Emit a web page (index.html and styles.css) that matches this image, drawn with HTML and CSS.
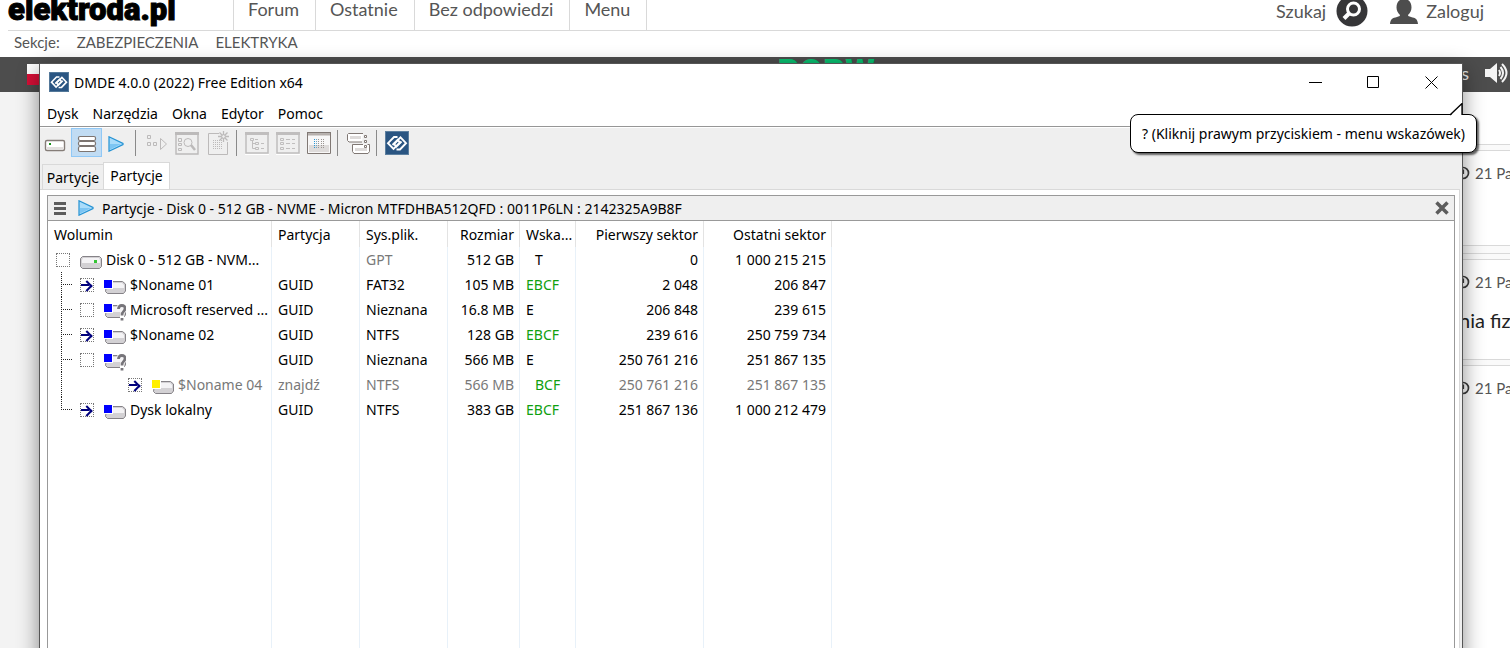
FILE: index.html
```html
<!DOCTYPE html>
<html lang="pl">
<head>
<meta charset="utf-8">
<title>elektroda.pl</title>
<link rel="stylesheet" href="styles.css">
</head>
<body>
<svg class="defs" aria-hidden="true">
  <symbol id="dmde" viewBox="0 0 24 24">
    <rect width="24" height="24" fill="#2a5582"/>
    <rect x=".5" y=".5" width="23" height="23" fill="none" stroke="#5c7f9f"/>
    <g fill="none" stroke="#fff" stroke-width="1.900">
      <path d="M12.500 6H9L3 12.200l5.500 5.800L15 11.500l-2.300-2.600L7.500 14"/>
      <path d="M11.500 18.500H15L21 12.200l-5.500-5.800L9 13l2.300 2.600L16.500 10.500"/>
    </g>
  </symbol>
  <symbol id="part" viewBox="0 0 22 16">
    <path d="M3 2.500h15.500l3 2.500v7l-2 2.500h-16l-2-2z" fill="#d3d1d4" stroke="#858287"/>
    <path d="M4 4h14l2 2v3h-16z" fill="#f4f3f5"/>
  </symbol>
  <symbol id="quest" viewBox="0 0 22 18">
    <path d="M14.500 5.500q0-3 3.500-3t3.200 3q0 1.500-1.700 3t-1.500 3.500v5" fill="none" stroke="#fff" stroke-width="4"/>
    <path d="M14.500 6q0-3.500 3.300-3.500t3.200 3q0 1.800-1.500 3t-1.500 4M18 15v2.500" fill="none" stroke="#77757a" stroke-width="2.800"/>
  </symbol>
  <symbol id="play" viewBox="0 0 16 16">
    <path d="M1 .8v14.400L15 8.500v-1z" fill="#a9dcfb" stroke="#2492d3" stroke-width="1.200"/>
    <path d="M2 8h11L2 13.500z" fill="#7cc5f3"/>
  </symbol>
  <symbol id="clock" viewBox="0 0 14 14">
    <circle cx="7" cy="7" r="5.500" fill="none" stroke="#3c3c3c" stroke-width="1.700"/>
    <path d="M7.500 3.500v4H4.500" fill="none" stroke="#3c3c3c" stroke-width="1.200"/>
  </symbol>
</svg>

<header class="site-head">
  <a class="logo" href="#">elektroda.pl</a>
  <nav class="site-nav">
    <a href="#">Forum</a><a href="#">Ostatnie</a><a href="#">Bez odpowiedzi</a><a href="#">Menu</a>
  </nav>
  <div class="account">
    <a href="#">Szukaj
      <svg width="32" height="32" viewBox="0 0 32 32"><circle cx="16" cy="16" r="15.500" fill="#363638"/><circle cx="17.500" cy="14" r="6" fill="none" stroke="#fff" stroke-width="3"/><path d="M13 18.500l-5 5" stroke="#fff" stroke-width="4"/></svg>
    </a>
    <a href="#">
      <svg width="28" height="28" viewBox="0 0 28 28"><path d="M14 2c5 0 7.500 3.500 7.500 8.500 0 3-1.500 6-3.500 7.500 0 1 1 1.500 3 2 4.500 1 6.500 2 7 7H0c.5-5 2.500-6 7-7 2-.5 3-1 3-2-2-1.500-3.500-4.500-3.500-7.500C6.500 5.500 9 2 14 2z" fill="#4d4d4d"/></svg>
      Zaloguj</a>
  </div>
</header>
<nav class="sections"><span>Sekcje:</span><a href="#">ZABEZPIECZENIA</a><a href="#">ELEKTRYKA</a></nav>
<div class="banner">
  <span class="flag"></span>
  <span class="promo">PORW</span>
  <span class="sound">s
    <svg width="24" height="20" viewBox="0 0 24 20"><path d="M0 6h5l7-6v20l-7-6H0z" fill="#f4f4f4"/><path d="M14 7q2 3 0 6M15.500 4q5 6 0 12M17 1q9 9 0 18" fill="none" stroke="#f4f4f4" stroke-width="2"/></svg>
  </span>
</div>
<main class="forum">
  <div class="posts">
    <div class="rule"></div>
    <article class="post post-tall"><p class="date"><svg width="14" height="14"><use href="#clock"/></svg>21 Pa</p></article>
    <div class="rule rule-thin"></div>
    <div class="rule"></div>
    <article class="post"><p class="date"><svg width="14" height="14"><use href="#clock"/></svg>21 Pa</p><p class="topic">nia fiz</p></article>
    <div class="rule"></div>
    <article class="post"><p class="date"><svg width="14" height="14"><use href="#clock"/></svg>21 Pa</p></article>
  </div>
</main>

<section class="window" aria-label="DMDE">
  <div class="titlebar">
    <svg width="20" height="20"><use href="#dmde"/></svg>
    <h1>DMDE 4.0.0 (2022) Free Edition x64</h1>
    <div class="controls">
      <button aria-label="Minimalizuj"><svg width="13" height="13"><path d="M0 6.500h13" stroke="#000"/></svg></button>
      <button aria-label="Maksymalizuj"><svg width="13" height="13"><path d="M.5.500h11v11H.5z" fill="none" stroke="#000"/></svg></button>
      <button aria-label="Zamknij"><svg width="13" height="13"><path d="M.5.500l12 12M12.500.500l-12 12" stroke="#000"/></svg></button>
    </div>
  </div>
  <nav class="menu"><button>Dysk</button><button>Narzędzia</button><button>Okna</button><button>Edytor</button><button>Pomoc</button></nav>
  <div class="toolbar">
    <button aria-label="Dysk"><svg width="31" height="29"><rect x="5.500" y="12.500" width="19" height="10" rx="1.500" fill="#fff" stroke="#857d78" stroke-width="1.400"/><path d="M7 19h16v2H7z" fill="#e2dfde"/><path d="M9 15h2v2H9z" fill="#189018"/></svg></button>
    <button class="active" aria-label="Partycje"><svg width="31" height="29" fill="#fff" stroke="#7d7571" stroke-width="1.200"><rect x="7.500" y="8.500" width="17" height="4" rx="1.500"/><rect x="7.500" y="13.500" width="17" height="4" rx="1.500"/><rect x="7.500" y="18.500" width="17" height="5" rx="1.500"/></svg></button>
    <button aria-label="Otwórz"><svg width="31" height="29"><use href="#play" x="6" y="8" width="16" height="16"/></svg></button>
    <i class="sep"></i>
    <button aria-label="Dalej"><svg width="31" height="29" fill="none" stroke="#bcbaba"><path d="M6.500 7.500h3v3h-3zM6.500 14.500h3v3h-3zM12.500 14.500h3v3h-3zM19.500 10.500v11l6-5.500z"/></svg></button>
    <button aria-label="Szukaj"><svg width="31" height="29" fill="none" stroke="#bcbaba"><path d="M4 5v21h22V5z" stroke-width="1.400"/><path d="M3 5.500h24" stroke-width="3"/><path d="M6.500 10.500h3v3h-3zM6.500 15.500h3v2h-3zM6.500 20.500h3v2h-3z"/><circle cx="16" cy="14.500" r="4"/><path d="M19 17l4 5" stroke-width="2.500"/></svg></button>
    <button aria-label="Nowy"><svg width="31" height="29" fill="none" stroke="#bcbaba"><path d="M16 5.500H5.500v21h19V14"/><path d="M10 12.500h9M10 14.500h9M10 16.500h9M10 18.500h9M10 20.500h9" stroke-dasharray="1 1"/><path d="M20.500 3v11M15 8.500h11M16.500 4.500l8 8M24.500 4.500l-8 8" stroke-width="1.300"/><circle cx="20.500" cy="8.500" r="1.800" fill="#efefef"/></svg></button>
    <i class="sep"></i>
    <button aria-label="Drzewo"><svg width="31" height="29" fill="none" stroke="#c0bebe"><path d="M4 5v20h22V5z" stroke-width="1.500"/><path d="M3 5.500h24" stroke-width="3"/><path d="M3 26.500h24" stroke="#fff"/><path d="M8.500 10.500h3v2h-3zM13.500 14.500h3v2h-3zM13.500 19.500h3v2h-3zM10.500 13v7.500h3M10.500 15.500h3M13 11.500h3M19 15.500h3M19 20.500h3"/></svg></button>
    <button aria-label="Lista"><svg width="31" height="29" fill="none" stroke="#c0bebe"><path d="M4 5v20h22V5z" stroke-width="1.500"/><path d="M3 5.500h24" stroke-width="3"/><path d="M3 26.500h24" stroke="#fff"/><path d="M7.500 10.500h3v2h-3zM7.500 14.500h3v2h-3zM7.500 19.500h3v2h-3zM13 11.500h4M19 11.500h3M13 15.500h4M19 15.500h3M13 20.500h4M19 20.500h3"/></svg></button>
    <button aria-label="Hex"><svg width="31" height="29" fill="none"><path d="M3.500 5v20.500h23V5z" fill="#f8f7f7" stroke="#807874"/><path d="M5 17h20v7H5z" fill="#dedbda"/><path d="M4 6.500h22" stroke="#b5aeab" stroke-width="2"/><path d="M3 4.500h24" stroke="#807874"/><path d="M10.500 11v9" stroke="#2596d6" stroke-dasharray="1 1"/><path d="M12.500 11v9" stroke="#6fa8c8" stroke-dasharray="1 1"/><path d="M14.500 11v9M17.500 11v9M19.500 11v9" stroke="#9b9591" stroke-dasharray="1 1"/></svg></button>
    <i class="sep"></i>
    <button aria-label="Układ"><svg width="31" height="29" fill="#fff" stroke="#807874"><path d="M20 5.500H5.500l-1 1v6l1.500 1.500h13"/><path d="M7 8h11v3H7z" fill="#dedbda" stroke="none"/><path d="M20 16.500H9.500v7l1.500 2h14l1.500-2v-7h-2"/><path d="M12 20h12v3H12z" fill="#dedbda" stroke="none"/><path d="M21.500 7.500h2v2h-2zM21.500 12.500h2v2h-2zM21.500 17.500h2v2h-2z"/></svg></button>
    <i class="sep"></i>
    <button aria-label="DMDE"><svg width="31" height="29"><use href="#dmde" x="3" y="3" width="24" height="24"/></svg></button>
  </div>
  <div class="tabs" role="tablist"><button role="tab">Partycje</button><button role="tab" class="current" aria-selected="true">Partycje</button></div>
  <div class="page">
    <div class="panel">
      <div class="panel-head">
        <button aria-label="Menu panelu"><svg width="12" height="13"><path d="M0 1.500h12M0 6.500h12M0 11.500h12" stroke="#5c5c5c" stroke-width="3"/></svg></button>
        <svg width="16" height="16"><use href="#play"/></svg>
        <h2>Partycje - Disk 0 - 512 GB - NVME - Micron MTFDHBA512QFD : 0011P6LN : 2142325A9B8F</h2>
        <button aria-label="Zamknij panel"><svg width="14" height="14"><path d="M1.500 1.500l11 11M12.500 1.500l-11 11" stroke="#5c5c5c" stroke-width="3.500"/></svg></button>
      </div>
      <table>
        <colgroup><col class="c-vol"><col class="c-part"><col class="c-part"><col class="c-size"><col class="c-flag"><col class="c-sec"><col class="c-sec"><col></colgroup>
        <thead><tr><th>Wolumin</th><th>Partycja</th><th>Sys.plik.</th><th class="num">Rozmiar</th><th>Wska...</th><th class="num">Pierwszy sektor</th><th class="num">Ostatni sektor</th><th></th></tr></thead>
        <tbody>
          <tr><td><label class="vol"><input type="checkbox"><svg width="22" height="16" viewBox="0 0 22 16"><path d="M2.500 2.500h17l2 2v8l-2 2h-17l-2-2v-8z" fill="#d3d1d4" stroke="#858287"/><path d="M3 4h16l1 2v3H2V6z" fill="#f4f3f5"/><path d="M14 6h3v3h-3z" fill="#35c535"/></svg>Disk 0 - 512 GB - NVM...</label></td><td></td><td class="dim">GPT</td><td class="num">512 GB</td><td class="shift">T</td><td class="num">0</td><td class="num">1 000 215 215</td><td></td></tr>
          <tr><td class="branch"><label class="vol child"><input type="checkbox" checked><svg width="22" height="16"><use href="#part"/><path d="M0 1h9v9H0z" fill="#fff"/><path d="M0 1h8v8H0z" fill="#00f"/></svg>$Noname 01</label></td><td>GUID</td><td>FAT32</td><td class="num">105 MB</td><td class="ok">EBCF</td><td class="num">2 048</td><td class="num">206 847</td><td></td></tr>
          <tr><td class="branch"><label class="vol child"><input type="checkbox"><svg width="22" height="18"><use href="#part" width="22" height="16"/><use href="#quest"/><path d="M0 1h9v9H0z" fill="#fff"/><path d="M0 1h8v8H0z" fill="#00f"/></svg>Microsoft reserved ...</label></td><td>GUID</td><td>Nieznana</td><td class="num">16.8 MB</td><td>E</td><td class="num">206 848</td><td class="num">239 615</td><td></td></tr>
          <tr><td class="branch"><label class="vol child"><input type="checkbox" checked><svg width="22" height="16"><use href="#part"/><path d="M0 1h9v9H0z" fill="#fff"/><path d="M0 1h8v8H0z" fill="#00f"/></svg>$Noname 02</label></td><td>GUID</td><td>NTFS</td><td class="num">128 GB</td><td class="ok">EBCF</td><td class="num">239 616</td><td class="num">250 759 734</td><td></td></tr>
          <tr><td class="branch"><label class="vol child"><input type="checkbox" aria-label="Nieznana"><svg width="22" height="18"><use href="#part" width="22" height="16"/><use href="#quest"/><path d="M0 1h9v9H0z" fill="#fff"/><path d="M0 1h8v8H0z" fill="#00f"/></svg></label></td><td>GUID</td><td>Nieznana</td><td class="num">566 MB</td><td>E</td><td class="num">250 761 216</td><td class="num">251 867 135</td><td></td></tr>
          <tr class="dim"><td class="branch through"><label class="vol grandchild"><input type="checkbox" checked><svg width="22" height="16"><use href="#part"/><path d="M0 1h9v9H0z" fill="#fff"/><path d="M0 1h8v8H0z" fill="#ffef00"/></svg>$Noname 04</label></td><td>znajdź</td><td>NTFS</td><td class="num">566 MB</td><td class="ok shift">BCF</td><td class="num">250 761 216</td><td class="num">251 867 135</td><td></td></tr>
          <tr><td class="branch last"><label class="vol child"><input type="checkbox" checked><svg width="22" height="16"><use href="#part"/><path d="M0 1h9v9H0z" fill="#fff"/><path d="M0 1h8v8H0z" fill="#00f"/></svg>Dysk lokalny</label></td><td>GUID</td><td>NTFS</td><td class="num">383 GB</td><td class="ok">EBCF</td><td class="num">251 867 136</td><td class="num">1 000 212 479</td><td></td></tr>
          <tr class="fill"><td></td><td></td><td></td><td></td><td></td><td></td><td></td><td></td></tr>
        </tbody>
      </table>
    </div>
  </div>
</section>
<div class="tip" role="tooltip">
  <svg class="tip-arrow" width="14" height="14"><path d="M1 12L12 1v11" fill="#fff"/><path d="M0 12L12 .500V12" fill="none" stroke="#000" stroke-width="1.300"/></svg>
  ? (Kliknij prawym przyciskiem - menu wskazówek)
</div>
</body>
</html>
```
FILE: styles.css
```css
* { box-sizing: border-box; }
body {
  margin: 0;
  height: 100vh;
  overflow: hidden;
  position: relative;
  display: flex;
  flex-direction: column;
  background: #fff;
  font-family: "Noto Sans", "Open Sans", sans-serif;
  font-size: 14px;
  color: #000;
}
svg { display: block; flex: none; }
a { color: inherit; text-decoration: none; }
button { border: 0; padding: 0; background: none; font: inherit; color: inherit; }
h1, h2, p { margin: 0; font-size: inherit; font-weight: 400; }
.defs { position: absolute; width: 0; height: 0; }

/* forum page */
.site-head, .sections, .posts, .banner { font-family: Lato, sans-serif; color: #555; }
.site-head {
  flex: none;
  display: flex;
  height: 31px;
  margin-left: 8px;
  border-bottom: 1px solid #d9d9d9;
}
.logo {
  width: 225px;
  font-family: Roboto, sans-serif;
  font-size: 31px;
  line-height: 20px;
  font-weight: 900;
  color: #000;
  -webkit-text-stroke: 1px #000;
}
.site-nav { display: flex; border-left: 1px solid #d9d9d9; font-size: 18px; line-height: 18px; }
.site-nav a { padding: 0 16px 0 14px; border-right: 1px solid #d9d9d9; }
.account { display: flex; gap: 24px; margin-left: auto; padding-right: 26px; font-size: 18px; }
.account a { display: flex; align-items: center; gap: 8px; height: 21px; }
.account a:first-child { gap: 10px; margin-right: -2px; }
.sections {
  flex: none;
  display: flex;
  gap: 17px;
  height: 26px;
  padding-left: 14px;
  font-size: 15px;
  line-height: 22px;
}
.banner { flex: none; display: flex; justify-content: space-between; height: 35px; background: #4d4d4d; }
.flag { width: 24px; height: 21px; margin: 7px 0 0 27px; background: linear-gradient(#fff 50%, #d80f37 50%); }
.promo { margin-left: 140px; font: 900 34px/28px Roboto, sans-serif; color: #0abf70; }
.sound { display: flex; align-items: center; gap: 16px; height: 31px; padding-right: 1px; font-size: 18px; color: #eee; }
.forum { flex: 1; display: flex; }
.forum::before { content: ""; width: 60px; background: #f3f3f3; }
.posts { flex: 1; display: flex; flex-direction: column; align-items: stretch; padding-top: 52px; overflow: hidden; }
.rule { flex: none; height: 7px; border: solid #d9d9d9; border-width: 1px 0; background: #fafafa; }
.rule-thin { border-bottom: 0; height: 8px; }
.post { width: 54px; height: 99px; margin-left: auto; padding-top: 12px; white-space: nowrap; }
.post-tall { height: 94px; }
.date { display: flex; align-items: center; gap: 5px; font-size: 15px; line-height: 20px; }
.topic { margin-top: 16px; padding-left: 3px; font-size: 20px; line-height: 24px; color: #222; }

/* application window */
.window {
  position: absolute;
  inset: 63px 47px -20px 39px;
  display: flex;
  flex-direction: column;
  border: 1px solid #555;
  background: #efefef;
  box-shadow: 0 6px 20px rgba(0, 0, 0, .45);
}
.titlebar { flex: none; display: flex; align-items: center; gap: 5px; height: 36px; padding: 0 2px 0 9px; background: #fff; }
.controls { display: flex; margin-left: auto; }
.controls button { display: grid; place-items: center; width: 58px; height: 36px; }
.menu { flex: none; display: flex; gap: 14px; height: 26px; padding-left: 7px; background: #fff; line-height: 28px; }
.toolbar { flex: none; display: flex; height: 36px; border-top: 1px solid #969696; box-shadow: inset 0 1px #fff; padding-top: 1px; }
.toolbar button { width: 31px; height: 29px; }
.toolbar .active { background: #c1dcf3; outline: 1px solid #90c8f6; outline-offset: -1px; }
.sep { width: 8px; height: 26px; margin-top: 2px; background: linear-gradient(#8a8a8a, #8a8a8a) 2px 0 / 1px 100% no-repeat; }
.tabs { flex: none; display: flex; align-items: flex-end; height: 27px; padding-left: 2px; }
.tabs button { width: 61px; height: 25px; border: 1px solid #d9d9d9; border-width: 1px 0 0 1px; }
.tabs .current { width: 67px; height: 27px; padding-bottom: 2px; border-right-width: 1px; background: #fff; }
.page { flex: 1; display: flex; margin-right: 2px; padding: 5px 4px 0 7px; border: 1px solid #d9d9d9; border-left: 0; background: #fff; }
.panel { flex: 1; display: flex; flex-direction: column; border: 1px solid #999; }
.panel-head { flex: none; display: flex; align-items: center; gap: 12px; height: 25px; padding: 0 5px 0 6px; border-bottom: 1px solid #999; background: #efefef; }
.panel-head h2 { flex: 1; margin-left: -4px; }

table { flex: 1; width: 100%; table-layout: fixed; border-collapse: separate; border-spacing: 0; }
.c-vol { width: 224px; }
.c-part { width: 88px; }
.c-size { width: 72px; }
.c-flag { width: 56px; }
.c-sec { width: 128px; }
th, td { height: 25px; padding: 0 5px 0 6px; border-right: 1px solid #e8f1f9; font-weight: 400; text-align: left; line-height: 24px; white-space: nowrap; }
th { height: 26px; padding-top: 2px; border-color: #e3e3e3; }
th:last-child, td:last-child { border-right: 0; }
td:first-child { position: relative; padding: 0; }
tr .num { text-align: right; }
.fill td { height: auto; }
.dim { color: #787878; }
tr .ok { color: #0fa00f; }
tr .shift { padding-left: 15px; }
.vol { display: flex; align-items: center; height: 25px; padding-left: 8px; }
.vol svg { margin: 4px 4px 0 10px; }
.child { padding-left: 32px; }
.grandchild { padding-left: 80px; }
input {
  appearance: none;
  flex: none;
  position: relative;
  width: 14px;
  height: 14px;
  margin: 0;
  border: 1px dotted #777;
}
input:checked { background: linear-gradient(#00007c, #00007c) 0 5px / 8px 2px no-repeat; }
input:checked::after {
  content: "";
  position: absolute;
  top: 3px;
  left: 2px;
  width: 6px;
  height: 6px;
  border: solid #00007c;
  border-width: 2px 2px 0 0;
  transform: rotate(45deg);
}
.branch::before, .branch::after { content: ""; position: absolute; left: 13px; }
.branch::before { top: 0; bottom: 0; border-left: 1px dotted #222; }
.branch::after { top: 12px; width: 11px; border-top: 1px dotted #222; }
.through::after { display: none; }
.last::before { bottom: 12px; }

/* hint balloon */
.tip {
  position: absolute;
  top: 114px;
  right: 33px;
  padding: 0 11px;
  border: 1px solid #000;
  border-radius: 8px;
  background: #fff;
  box-shadow: 2px 2px 2px rgba(0, 0, 0, .6);
  line-height: 37px;
  white-space: nowrap;
}
.tip-arrow { position: absolute; top: -12px; right: 12px; }
```
